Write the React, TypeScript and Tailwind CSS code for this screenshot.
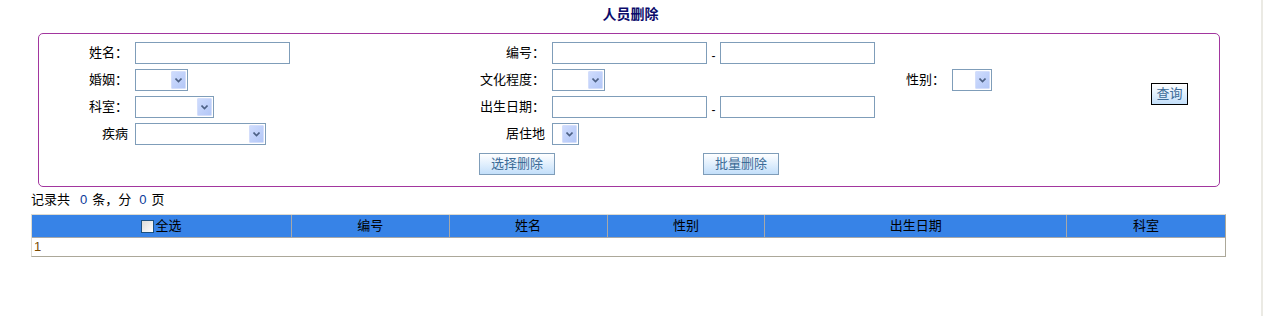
import React from 'react';

const font = { fontFamily: '"Liberation Sans", "Noto Sans CJK SC", sans-serif' };

const TextInput = () => (
  <div className="h-[22px] w-[155px] border border-[#7f9db9] bg-white" />
);

const Select = ({ width }: { width: string }) => (
  <div className={`flex h-[22px] ${width} justify-end border border-[#7f9db9] bg-white p-px`}>
    <div className="flex h-full w-[15px] items-center justify-center rounded-[1px] border border-[#d4defb] bg-gradient-to-br from-[#cfdcfd] to-[#b3c7f7]">
      <svg width="7" height="5" viewBox="0 0 7 5">
        <path d="M0.5 0.5 L3.5 3.5 L6.5 0.5" fill="none" stroke="#4d6185" strokeWidth="1.6" />
      </svg>
    </div>
  </div>
);

const Btn = ({ label, dark }: { label: string; dark?: boolean }) => (
  <button
    className={`h-[22px] border ${dark ? 'w-[37px] border-black' : 'w-[76px] border-[#7f9db9]'} bg-gradient-to-b from-white to-[#c3dffa] text-[13px] leading-[20px] text-[#3c6b97]`}
  >
    {label}
  </button>
);

const Label = ({ text, row, col }: { text: string; row: string; col: string }) => (
  <div className={`${row} ${col} pr-[7px] text-right text-[13px] leading-[22px] text-black`}>{text}</div>
);

const Range = () => (
  <div className="flex items-end">
    <TextInput />
    <span className="w-[13px] pb-[2px] text-center text-[12px] leading-[12px]">-</span>
    <TextInput />
  </div>
);

const App = () => {
  const cols = ['编号', '姓名', '性别', '出生日期', '科室'];
  const widths = ['w-[158px]', 'w-[158px]', 'w-[158px]', 'w-[302px]', 'w-[158px]'];

  return (
    <div className="flex min-h-[316px] w-[1263px] bg-white" style={font}>
      <div className="flex-1">
        <div className="h-[33px] pt-[5px] text-center text-[14px] font-bold leading-[18px] text-[#0b0b6b]">
          人员删除
        </div>

        <div className="ml-[38px] w-[1182px] rounded-[5px] border border-[#a2369f] pt-[8px] pb-[11px]">
          <div className="grid grid-cols-[96px_305px_112px_328px_72px_148px_1fr] grid-rows-[22px_22px_22px_22px] gap-y-[5px]">
            <Label text="姓名：" row="row-start-1" col="col-start-1" />
            <div className="col-start-2 row-start-1"><TextInput /></div>
            <Label text="编号：" row="row-start-1" col="col-start-3" />
            <div className="col-start-4 row-start-1"><Range /></div>

            <Label text="婚姻：" row="row-start-2" col="col-start-1" />
            <div className="col-start-2 row-start-2"><Select width="w-[53px]" /></div>
            <Label text="文化程度：" row="row-start-2" col="col-start-3" />
            <div className="col-start-4 row-start-2"><Select width="w-[53px]" /></div>
            <Label text="性别：" row="row-start-2" col="col-start-5" />
            <div className="col-start-6 row-start-2"><Select width="w-[40px]" /></div>

            <Label text="科室：" row="row-start-3" col="col-start-1" />
            <div className="col-start-2 row-start-3"><Select width="w-[79px]" /></div>
            <Label text="出生日期：" row="row-start-3" col="col-start-3" />
            <div className="col-start-4 row-start-3"><Range /></div>

            <Label text="疾病" row="row-start-4" col="col-start-1" />
            <div className="col-start-2 row-start-4"><Select width="w-[131px]" /></div>
            <Label text="居住地" row="row-start-4" col="col-start-3" />
            <div className="col-start-4 row-start-4"><Select width="w-[27px]" /></div>

            <div className="col-start-7 row-span-4 row-start-1 flex items-center pl-[51px] pt-px">
              <Btn label="查询" dark />
            </div>
          </div>

          <div className="mt-[8px] flex gap-[148px] pl-[440px]">
            <Btn label="选择删除" />
            <Btn label="批量删除" />
          </div>
        </div>

        <div className="ml-[31px] mt-[3px] h-[20px] text-[13px] leading-[20px] text-black">
          记录共<span className="ml-[10px] mr-[5px] text-[#0a3a9a]">0</span>条，分<span className="ml-[8px] mr-[5px] text-[#0a3a9a]">0</span>页
        </div>

        <div className="ml-[31px] mt-[4px] w-[1195px] border-t border-l border-r border-b border-t-[#dedbd0] border-l-[#dedbd0] border-r-[#aca899] border-b-[#aca899]">
          <div className="flex h-[22px] bg-[#3783e7] text-[13px] leading-[22px] text-black">
            <div className="flex w-[260px] items-center justify-center border-r border-[#a8a8a8]">
              <span className="mr-px inline-block h-[13px] w-[13px] border border-[#1c5180] bg-gradient-to-br from-[#dcdcd7] to-white" />
              全选
            </div>
            {cols.map((c, i) => (
              <div key={c} className={`${widths[i]} text-center ${i < cols.length - 1 ? 'border-r border-[#a8a8a8]' : ''}`}>
                {c}
              </div>
            ))}
          </div>
          <div className="h-[19px] border-t border-[#a8a8a8] bg-white pl-[2px] text-[13px] leading-[18px] text-[#7a4a00]">
            1
          </div>
        </div>
      </div>
      <div className="w-[2px] bg-[#ebeae4]" />
    </div>
  );
};

export default App;
